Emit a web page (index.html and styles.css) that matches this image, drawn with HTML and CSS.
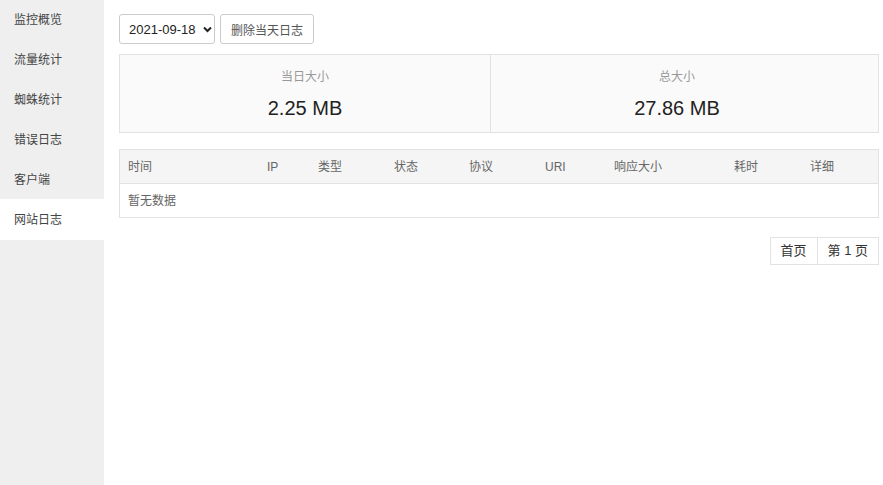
FILE: index.html
```html
<!DOCTYPE html>
<html lang="zh-CN">
<head>
<meta charset="utf-8">
<title>网站日志</title>
<link rel="stylesheet" href="styles.css">
</head>
<body>
<div class="layout">
  <nav class="side">
    <div class="side-item">监控概览</div>
    <div class="side-item">流量统计</div>
    <div class="side-item">蜘蛛统计</div>
    <div class="side-item">错误日志</div>
    <div class="side-item">客户端</div>
    <div class="side-item active">网站日志</div>
  </nav>
  <main class="main">
    <div class="toolbar">
      <div class="select-wrap">
        <select class="date-select">
          <option>2021-09-18</option>
        </select>
        <svg class="chev" width="9" height="7" viewBox="0 0 9 7"><path d="M1 1.5 L4.5 5 L8 1.5" fill="none" stroke="#222" stroke-width="2"/></svg>
      </div>
      <button class="btn">删除当天日志</button>
    </div>
    <div class="stats">
      <div class="stat stat-day">
        <div class="stat-label">当日大小</div>
        <div class="stat-value">2.25 MB</div>
      </div>
      <div class="stat stat-total">
        <div class="stat-label">总大小</div>
        <div class="stat-value">27.86 MB</div>
      </div>
    </div>
    <div class="table">
      <div class="row head">
        <div class="cell">时间</div>
        <div class="cell">IP</div>
        <div class="cell">类型</div>
        <div class="cell">状态</div>
        <div class="cell">协议</div>
        <div class="cell">URI</div>
        <div class="cell">响应大小</div>
        <div class="cell">耗时</div>
        <div class="cell">详细</div>
      </div>
      <div class="row empty">
        <div class="cell">暂无数据</div>
      </div>
    </div>
    <div class="pager">
      <span class="page-item">首页</span>
      <span class="page-item">第 1 页</span>
    </div>
  </main>
</div>
</body>
</html>
```
FILE: styles.css
```css
* { box-sizing: border-box; }
html, body {
  margin: 0;
  padding: 0;
  background: #fff;
  font-family: "Liberation Sans", "Noto Sans CJK SC", sans-serif;
  color: #333;
}
.layout {
  display: flex;
  width: 883px;
  height: 485px;
}
.side {
  width: 104px;
  flex: none;
  background: #efefef;
}
.side-item {
  height: 40px;
  line-height: 40px;
  padding-left: 14px;
  font-size: 12px;
  color: #444;
}
.side-item.active {
  background: #fff;
  margin-top: -1px;
  height: 41px;
  line-height: 42px;
}
.main {
  flex: 1;
  padding: 14px 4px 0 15px;
}
.toolbar {
  display: flex;
  gap: 5px;
  height: 30px;
}
.select-wrap {
  position: relative;
  width: 96px;
  height: 30px;
}
.date-select {
  appearance: none;
  -webkit-appearance: none;
  width: 96px;
  height: 30px;
  border: 1px solid #ccc;
  border-radius: 3px;
  background: #fff;
  padding: 0 0 0 9px;
  font-family: "Liberation Sans", sans-serif;
  font-size: 13px;
  color: #222;
  outline: none;
}
.chev {
  position: absolute;
  left: 84px;
  top: 12px;
  pointer-events: none;
}
.btn {
  height: 30px;
  width: 94px;
  border: 1px solid #ccc;
  border-radius: 3px;
  background: #fff;
  font-family: "Liberation Sans", "Noto Sans CJK SC", sans-serif;
  font-size: 12px;
  color: #555;
  padding: 0;
}
.stats {
  margin-top: 10px;
  display: flex;
  height: 79px;
  border: 1px solid #e2e2e2;
  background: #fafafa;
}
.stat {
  text-align: center;
  padding-top: 13px;
}
.stat-day {
  flex: 0 0 370px;
}
.stat-total {
  flex: 1;
  border-left: 1px solid #e2e2e2;
  padding-right: 15px;
}
.stat-label {
  font-size: 12px;
  color: #999;
  line-height: 18px;
}
.stat-value {
  margin-top: 8px;
  font-size: 20px;
  line-height: 28px;
  color: #222;
}
.table {
  margin-top: 16px;
  border: 1px solid #e2e2e2;
}
.row {
  display: grid;
  grid-template-columns: 139px 51px 76px 75px 76px 69px 120px 76px 1fr;
  height: 34px;
}
.row.head {
  background: #f5f5f5;
  border-bottom: 1px solid #e2e2e2;
}
.row.empty {
  display: flex;
  height: 33px;
}
.cell {
  padding-left: 8px;
  padding-top: 2px;
  font-size: 12px;
  line-height: 31px;
  color: #666;
}
.pager {
  margin-top: 19px;
  display: flex;
  justify-content: flex-end;
}
.page-item {
  height: 28px;
  line-height: 26px;
  border: 1px solid #e2e2e2;
  font-size: 13px;
  color: #333;
  padding: 0 10px;
}
.page-item + .page-item {
  border-left: none;
}
```
